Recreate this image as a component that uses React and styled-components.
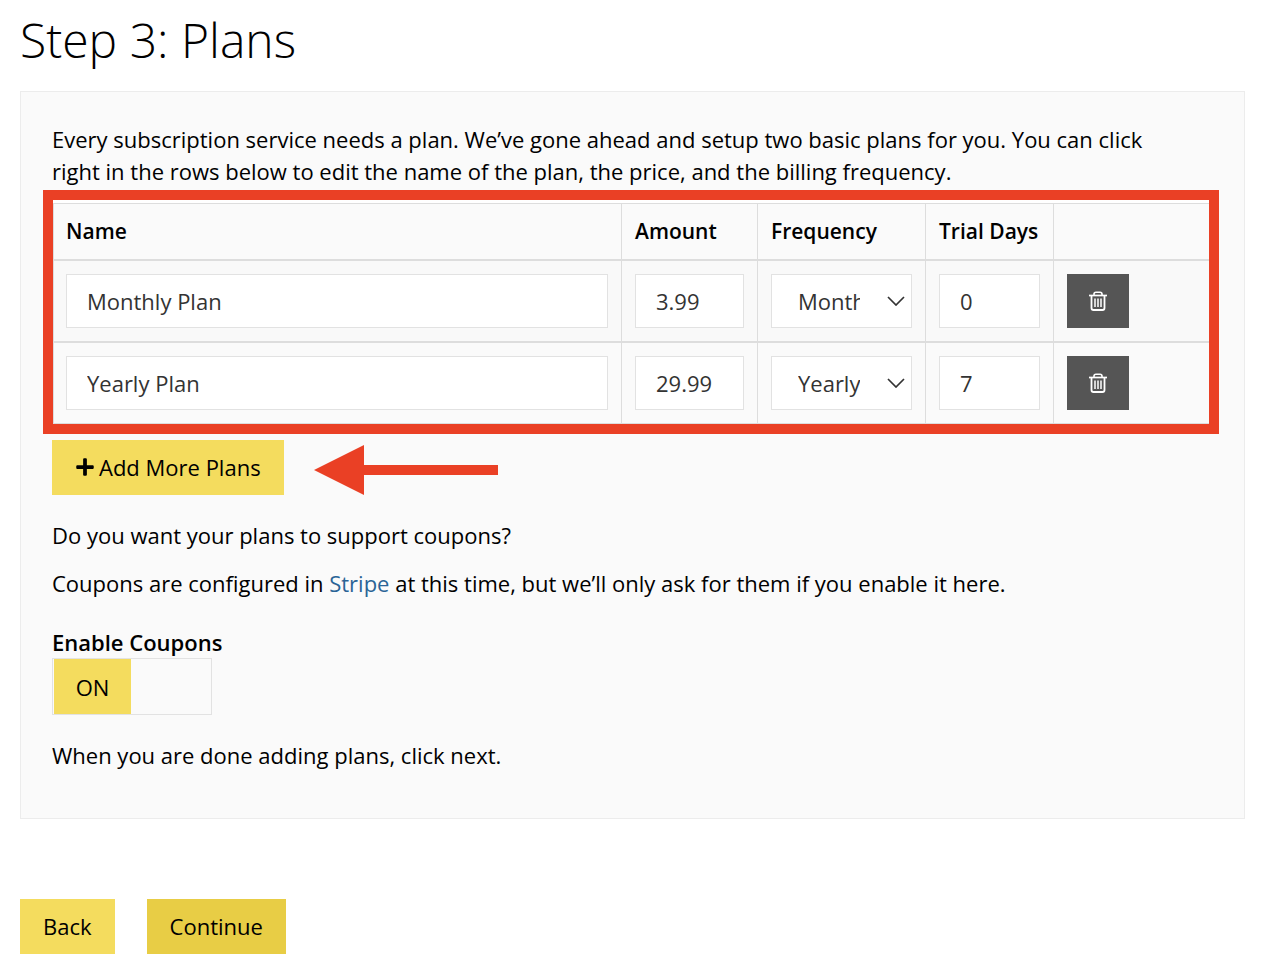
import { useState } from 'react'
import styled, { createGlobalStyle } from 'styled-components'
import { FaPlus } from 'react-icons/fa'

const startPlans = [
    { id: 1, name: 'Monthly Plan', amount: '3.99', frequency: 'Monthly', trial: '0' },
    { id: 2, name: 'Yearly Plan', amount: '29.99', frequency: 'Yearly', trial: '7' },
]

function TrashIcon() {
    return (
        <svg width="18" height="20" viewBox="0 0 18 20" fill="none" stroke="currentColor" aria-hidden="true">
            <path d="M0 4.5H18" strokeWidth="1.7" />
            <path d="M5 4.2V3Q5 1.2 7 1.2H11Q13 1.2 13 3V4.2" strokeWidth="1.6" />
            <path d="M2.5 4.5V17Q2.5 19 4.5 19H13.5Q15.5 19 15.5 17V4.5" strokeWidth="1.8" />
            <path d="M6 7.5V16M9 7.5V16M12 7.5V16" strokeWidth="1.5" />
        </svg>
    )
}

function Arrow() {
    return (
        <svg width="184" height="50" viewBox="0 0 184 50" fill="#ea4025" aria-hidden="true">
            <path d="M0 25L50 0V20H184V30H50V50Z" />
        </svg>
    )
}

function PlanRow({ plan, onChange, onRemove }) {
    const set = (key) => (e) => onChange(plan.id, key, e.target.value)

    return (
        <tr>
            <td><Field aria-label="Name" value={plan.name} onChange={set('name')} /></td>
            <td><Field aria-label="Amount" value={plan.amount} onChange={set('amount')} /></td>
            <td>
                <SelectBox>
                    <Select aria-label="Frequency" value={plan.frequency} onChange={set('frequency')}>
                        <option>Monthly</option>
                        <option>Yearly</option>
                    </Select>
                    <svg width="18" height="10" viewBox="0 0 18 10" fill="none" stroke="#333" strokeWidth="1.7" aria-hidden="true">
                        <path d="M1 1L9 9L17 1" />
                    </svg>
                </SelectBox>
            </td>
            <td><Field aria-label="Trial Days" value={plan.trial} onChange={set('trial')} /></td>
            <td>
                <RemoveButton type="button" aria-label="Remove plan" onClick={() => onRemove(plan.id)}>
                    <TrashIcon />
                </RemoveButton>
            </td>
        </tr>
    )
}

export default function App() {
    const [plans, setPlans] = useState(startPlans)
    const [coupons, setCoupons] = useState(true)

    const change = (id, key, value) =>
        setPlans(plans.map((p) => (p.id === id ? { ...p, [key]: value } : p)))
    const remove = (id) => setPlans(plans.filter((p) => p.id !== id))
    const add = () =>
        setPlans([...plans, { id: Date.now(), name: '', amount: '', frequency: 'Monthly', trial: '0' }])

    return (
        <Page>
            <GlobalStyle />
            <Title>Step 3: Plans</Title>

            <Panel>
                <Text>
                    Every subscription service needs a plan. We’ve gone ahead and setup two basic plans for you. You
                    can click right in the rows below to edit the name of the plan, the price, and the billing
                    frequency.
                </Text>

                <Highlight>
                    <Table>
                        <colgroup>
                            <col />
                            <col width="136" />
                            <col width="168" />
                            <col width="128" />
                            <col width="155" />
                        </colgroup>
                        <thead>
                            <tr>
                                <th>Name</th>
                                <th>Amount</th>
                                <th>Frequency</th>
                                <th>Trial Days</th>
                                <th></th>
                            </tr>
                        </thead>
                        <tbody>
                            {plans.map((plan) => (
                                <PlanRow key={plan.id} plan={plan} onChange={change} onRemove={remove} />
                            ))}
                        </tbody>
                    </Table>
                </Highlight>

                <AddRow>
                    <Button type="button" onClick={add}>
                        <FaPlus size={20} />
                        Add More Plans
                    </Button>
                    <Arrow />
                </AddRow>

                <Coupons>
                    <Text>Do you want your plans to support coupons?</Text>
                    <Text>
                        Coupons are configured in <Link href="#stripe">Stripe</Link> at this time, but we’ll only ask
                        for them if you enable it here.
                    </Text>
                </Coupons>

                <Label htmlFor="coupons">Enable Coupons</Label>
                <Toggle>
                    <input
                        id="coupons"
                        type="checkbox"
                        checked={coupons}
                        onChange={(e) => setCoupons(e.target.checked)}
                    />
                    <Knob $on={coupons}>{coupons ? 'ON' : 'OFF'}</Knob>
                </Toggle>

                <Text>When you are done adding plans, click next.</Text>
            </Panel>

            <Actions>
                <Button type="button">Back</Button>
                <Button type="button" $primary>Continue</Button>
            </Actions>
        </Page>
    )
}

const GlobalStyle = createGlobalStyle`
    * {
        box-sizing: border-box;
    }
    body {
        margin: 0;
        background: #fff;
        color: #000;
        font-family: "Open Sans", sans-serif;
        font-size: 22px;
        line-height: 32px;
    }
    input, select, button {
        font: inherit;
        border-radius: 0;
    }
`

const Page = styled.main`
    padding: 8px 37px 16px 20px;
`

const Title = styled.h1`
    margin: 0 0 19px;
    font-size: 48px;
    font-weight: 300;
    line-height: 64px;
`

const Panel = styled.section`
    padding: 31px 31px 47px;
    background: #fafafa;
    border: 1px solid #ececec;
`

const Text = styled.p`
    max-width: 1120px;
    margin: 0;
`

const Link = styled.a`
    color: #2a6496;
    text-decoration: none;
`

const Highlight = styled.div`
    margin: 3px -6px 6px -9px;
    padding-top: 3px;
    background: #fff;
    border: 10px solid #ea4025;
`

const Table = styled.table`
    width: 100%;
    table-layout: fixed;
    border-spacing: 0;
    border: 1px solid #ddd;
    border-width: 1px 0 0 1px;
    background: #fafafa;
    th, td {
        padding: 13px;
        border-right: 1px solid #ddd;
        border-bottom: 2px solid #ddd;
        text-align: left;
    }
    th {
        height: 57px;
        padding: 0 13px 2px;
        font-size: 21px;
        font-weight: 600;
        white-space: nowrap;
    }
    th:first-child, td:first-child {
        padding-left: 12px;
    }
    th:last-child, td:last-child {
        border-right: 0;
    }
    tbody tr:nth-child(odd) {
        background: #f9f9f9;
    }
    tbody tr:last-child td {
        border-bottom-width: 1px;
    }
`

const Field = styled.input`
    display: block;
    width: 100%;
    height: 54px;
    padding: 0 20px;
    background: #fff;
    border: 1px solid #e2e2e2;
    color: #333;
`

const SelectBox = styled.div`
    position: relative;
    svg {
        position: absolute;
        top: 22px;
        right: 7px;
        pointer-events: none;
    }
`

const Select = styled.select`
    display: block;
    width: 100%;
    height: 54px;
    padding: 0 51px 0 26px;
    appearance: none;
    background: #fff;
    border: 1px solid #e2e2e2;
    color: #333;
`

const RemoveButton = styled.button`
    display: grid;
    place-items: center;
    width: 62px;
    height: 54px;
    padding: 0;
    border: 0;
    background: #555;
    color: #fff;
    cursor: pointer;
`

const Button = styled.button`
    display: inline-flex;
    align-items: center;
    gap: 4px;
    height: 55px;
    padding: 0 23px 2px;
    border: 0;
    background: ${({ $primary }) => ($primary ? '#e8cd45' : '#f4dc5e')};
    color: #000;
    cursor: pointer;
`

const AddRow = styled.div`
    display: flex;
    align-items: flex-end;
    gap: 30px;
`

const Coupons = styled.div`
    display: grid;
    gap: 16px;
    margin: 24px 0 27px;
`

const Label = styled.label`
    display: block;
    font-weight: 600;
`

const Toggle = styled.label`
    display: block;
    position: relative;
    width: 160px;
    height: 57px;
    margin-bottom: 24px;
    padding: 0 1px;
    border: 1px solid #e2e2e2;
    cursor: pointer;
    input {
        position: absolute;
        inset: 0;
        margin: 0;
        opacity: 0;
    }
`

const Knob = styled.span`
    display: grid;
    place-items: center;
    width: 77px;
    height: 55px;
    margin-left: ${({ $on }) => ($on ? '0' : 'auto')};
    background: ${({ $on }) => ($on ? '#f4dc5e' : '#ddd')};
`

const Actions = styled.div`
    display: flex;
    gap: 32px;
    margin-top: 80px;
`
